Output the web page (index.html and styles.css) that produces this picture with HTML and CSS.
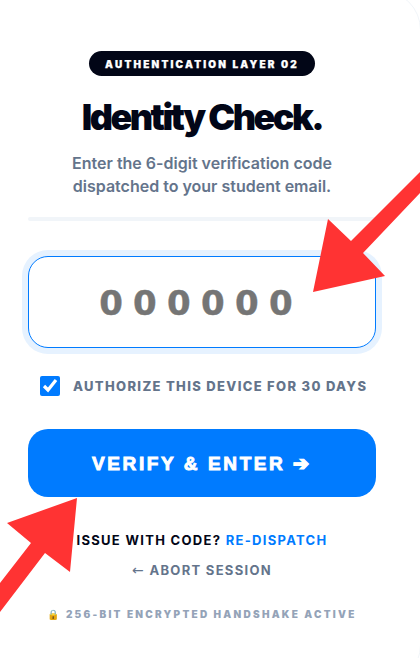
FILE: index.html
```html
<!DOCTYPE html>
<html lang="en">
<head>
<meta charset="utf-8">
<title>Identity Check</title>
<link rel="stylesheet" href="styles.css">
</head>
<body>
<main class="card">
  <span class="pill">AUTHENTICATION LAYER 02</span>
  <h1 class="title">Identity Check.</h1>
  <p class="lead">Enter the 6-digit verification code<br>dispatched to your student email.</p>
  <hr class="rule">
  <input class="code" type="text" placeholder="000000" maxlength="6">
  <label class="remember"><input class="tick" type="checkbox" checked><span>AUTHORIZE THIS DEVICE FOR 30 DAYS</span></label>
  <button class="submit" type="button">VERIFY &amp; ENTER ➔</button>
  <p class="issue">ISSUE WITH CODE? <a href="#">RE-DISPATCH</a></p>
  <a class="abort" href="#"><span class="back">←</span> ABORT SESSION</a>
  <p class="secure">🔒 256-BIT ENCRYPTED HANDSHAKE ACTIVE</p>
</main>
<svg class="arrows" viewBox="0 0 420 658" width="420" height="658" aria-hidden="true">
  <path d="M313 292 328 219 351 241 420 172V193L363 253 385 276Z"/>
  <path d="M77 498 7 523 31 543 0 583V612L45 553 70 572Z"/>
</svg>
</body>
</html>
```
FILE: styles.css
```css
* { box-sizing: border-box; }
html, body { margin: 0; height: 100%; background: #fff; overflow: hidden; }
body { position: relative; font-family: "Inter", "Liberation Sans", sans-serif; }
.card {
  height: 658px;
  padding: 51px 44px 0 28px;
  display: flex;
  flex-direction: column;
  align-items: center;
  background: #fff;
}
.card::before {
  content: "";
  position: absolute;
  top: -10px;
  right: -1px;
  bottom: -27px;
  left: -40px;
  border: 1px solid #f1f5f9;
  border-radius: 40px;
}
.pill {
  position: relative;
  height: 25px;
  padding: 0 16px;
  display: flex;
  align-items: center;
  border-radius: 13px;
  background: #020617;
  color: #fff;
  font-size: 10px;
  font-weight: 900;
  letter-spacing: 2.2px;
  white-space: nowrap;
  -webkit-text-stroke: 0.25px #fff;
}
.title {
  margin: 19px 0 0;
  color: #020617;
  font-size: 36px;
  line-height: 44px;
  font-weight: 900;
  letter-spacing: -2.52px;
  white-space: nowrap;
}
.lead {
  margin: 13px 0 0;
  color: #64748b;
  font-size: 16px;
  line-height: 23px;
  font-weight: 600;
  text-align: center;
}
.rule {
  width: 100%;
  height: 4px;
  margin: 19px 0 0;
  border: 0;
  border-radius: 2px;
  background: #f1f5f9;
}
.code {
  position: relative;
  width: 100%;
  height: 92px;
  margin: 35px 0 0;
  padding: 2px 2px 0 0;
  border: 1px solid #007bff;
  border-radius: 20px;
  box-shadow: 0 0 0 6px #e6f2ff;
  outline: 0;
  background: #fff;
  text-align: center;
  font-family: "DejaVu Sans", sans-serif;
  font-size: 34px;
  font-weight: 700;
  letter-spacing: 10.3px;
  -webkit-text-stroke: 0.4px #757575;
}
.code::placeholder { color: #757575; opacity: 1; }
.remember {
  position: relative;
  align-self: flex-start;
  margin: 28px 0 0 12px;
  display: flex;
  align-items: center;
  gap: 13px;
  color: #64748b;
  font-size: 13px;
  font-weight: 800;
  letter-spacing: 1.33px;
  white-space: nowrap;
}
.tick {
  width: 20px;
  height: 20px;
  margin: 0;
  accent-color: #007bff;
}
.submit {
  position: relative;
  width: 100%;
  height: 68px;
  margin: 33px 0 0;
  border: 0;
  border-radius: 20px;
  background: #007bff;
  color: #fff;
  font-family: "Liberation Sans", sans-serif;
  font-size: 19px;
  font-weight: 900;
  letter-spacing: 2.6px;
  -webkit-text-stroke: 0.9px #fff;
}
.issue {
  margin: 35px 0 0;
  color: #020617;
  font-size: 13px;
  line-height: 16px;
  font-weight: 700;
  letter-spacing: 1.3px;
}
.issue a { color: #007bff; text-decoration: none; }
.abort {
  margin: 14px 0 0;
  color: #64748b;
  font-size: 13px;
  line-height: 16px;
  font-weight: 700;
  letter-spacing: 1.3px;
  text-decoration: none;
}
.back {
  font-family: "DejaVu Sans", sans-serif;
  font-size: 14px;
  line-height: 1;
  font-weight: 400;
}
.secure {
  margin: 30px 0 0;
  color: #94a3b8;
  font-size: 10px;
  line-height: 12px;
  font-weight: 900;
  letter-spacing: 2.25px;
  white-space: nowrap;
}
.arrows { position: absolute; top: 0; left: 0; fill: #ff3333; pointer-events: none; }
```
